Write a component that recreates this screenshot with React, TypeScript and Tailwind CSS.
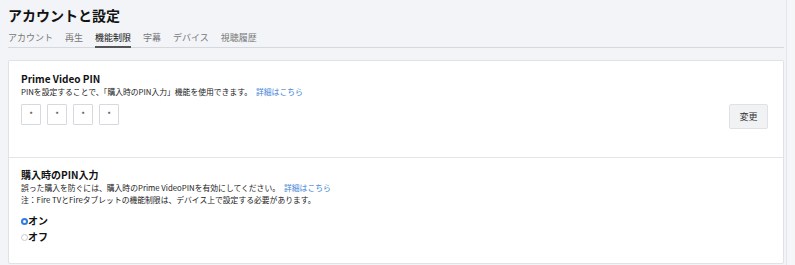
export default function App() {
  const tabs = ["アカウント", "再生", "機能制限", "字幕", "デバイス", "視聴履歴"];
  return (
    <div
      className="w-[795px] h-[265px] overflow-hidden bg-[#f2f4f7] text-[#111] flex"
      style={{ fontFamily: '"Noto Sans CJK JP", "Noto Sans", sans-serif' }}
    >
      <div className="w-[786px] pl-2 pr-[2px]">
        <h1 className="text-[14px] font-bold leading-[16px] pt-[7px] h-[30px]">アカウントと設定</h1>
        <div className="flex gap-[12px] border-b border-[#d5d9de] text-[9px] leading-[12px] h-[18px]">
          {tabs.map((t) => (
            <div
              key={t}
              className={
                t === "機能制限"
                  ? "text-[#111] border-b-2 border-[#555] pt-[2px] -mb-px h-[18px]"
                  : "text-[#777] pt-[2px]"
              }
            >
              {t}
            </div>
          ))}
        </div>
        <div className="mt-[12px] bg-white border border-[#dfe2e6] rounded-[2px] h-[204px]">
          <div className="flex items-end px-[12px] pt-[12px] pb-[32px] border-b border-[#e3e5e8]">
            <div className="flex-1">
              <div className="text-[10px] font-bold leading-[12px]">Prime Video PIN</div>
              <div className="text-[7.8px] leading-[10px] mt-[2px] text-[#222]">
                PINを設定することで、「購入時のPIN入力」機能を使用できます。
                <span className="text-[#3b82d6] ml-[4px]">詳細はこちら</span>
              </div>
              <div className="flex gap-[6px] mt-[7px]">
                {[0, 1, 2, 3].map((i) => (
                  <div
                    key={i}
                    className="w-[20px] h-[21px] border border-[#d6d9dd] rounded-[1px] flex items-center justify-center text-[8px] text-[#333]"
                  >
                    *
                  </div>
                ))}
              </div>
            </div>
            <button className="w-[39px] h-[25px] mb-[-4px] mr-[3px] bg-[#f1f2f4] border border-[#dfe1e4] rounded-[2px] text-[9px] text-[#333]">
              変更
            </button>
          </div>
          <div className="px-[12px] pt-[10px]">
            <div className="text-[10px] font-bold leading-[13px]">購入時のPIN入力</div>
            <div className="text-[7.8px] leading-[10px] mt-[2px] text-[#222]">
              誤った購入を防ぐには、購入時のPrime VideoPINを有効にしてください。
              <span className="text-[#3b82d6] ml-[4px]">詳細はこちら</span>
            </div>
            <div className="text-[7.8px] leading-[10px] mt-[2px] text-[#222]">
              注：Fire TVとFireタブレットの機能制限は、デバイス上で設定する必要があります。
            </div>
            <div className="mt-[10px] flex flex-col gap-[4px]">
              <label className="flex items-center text-[10px] font-bold leading-[12px]">
                <span className="w-[7px] h-[7px] rounded-full bg-[#2f7de1] flex items-center justify-center">
                  <span className="w-[3px] h-[3px] rounded-full bg-white" />
                </span>
                オン
              </label>
              <label className="flex items-center text-[10px] font-bold leading-[12px]">
                <span className="w-[7px] h-[7px] rounded-full border border-[#c8cbd0] bg-white" />
                オフ
              </label>
            </div>
          </div>
        </div>
      </div>
      <div className="w-[9px] border-l border-[#e2e5ea] bg-[#f5f6f8]" />
    </div>
  );
}
